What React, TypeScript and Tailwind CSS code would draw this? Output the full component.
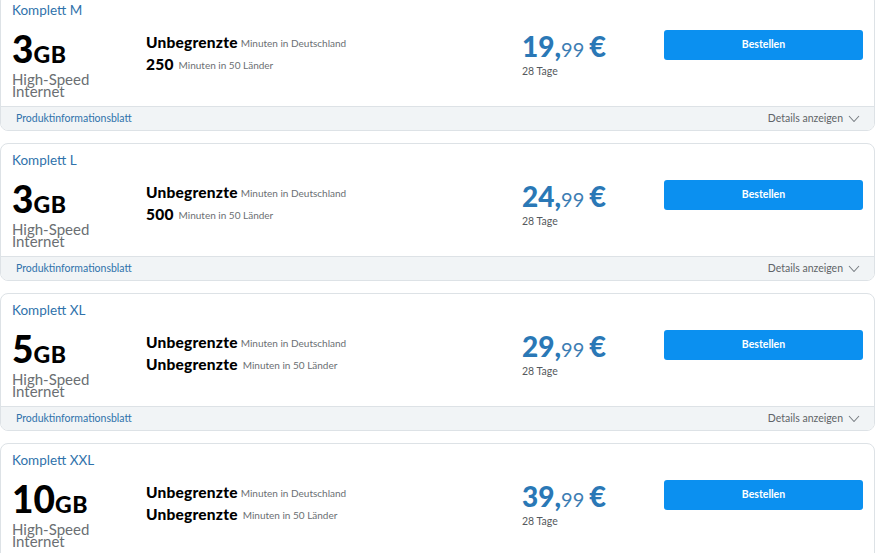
import React from "react";

type Plan = { name: string; gb: string; row2Bold: string; price: string };

const plans: Plan[] = [
  { name: "Komplett M", gb: "3", row2Bold: "250", price: "19" },
  { name: "Komplett L", gb: "3", row2Bold: "500", price: "24" },
  { name: "Komplett XL", gb: "5", row2Bold: "Unbegrenzte", price: "29" },
  { name: "Komplett XXL", gb: "10", row2Bold: "Unbegrenzte", price: "39" },
];

function Chevron() {
  return (
    <svg width="12" height="8" viewBox="0 0 12 8" className="ml-[5px]">
      <polyline points="1,1 6,6.5 11,1" fill="none" stroke="#7a7f84" strokeWidth="1.1" />
    </svg>
  );
}

function PlanCard({ plan }: { plan: Plan }) {
  return (
    <div className="w-[875px] h-[138px] shrink-0 flex flex-col rounded-lg border border-[#dde2e6] bg-white overflow-hidden">
      {/* header */}
      <div className="h-[36px] pl-[11px] pt-[8px] text-[13.5px] leading-4 text-[#2f72ab]">{plan.name}</div>

      {/* body */}
      <div className="h-[76px] flex items-start pl-[11px]">
        <div className="w-[134px] pt-[3px]">
          <div className="flex items-baseline leading-8 text-black font-black">
            <span className="text-[37px]">{plan.gb}</span>
            <span className="text-[23px] tracking-[0.7px]">GB</span>
          </div>
          <div className="mt-[4px] text-[15px] leading-[11.5px] text-[#6b6f73]">
            High-Speed
            <br />
            Internet
          </div>
        </div>

        <div className="flex-1 flex flex-col pt-[2px]">
          <div className="h-[22px] flex items-center">
            <span className="text-[15.5px] font-black tracking-[0.2px] text-black">Unbegrenzte</span>
            <span className="ml-[3px] text-[10px] text-[#6b6f73]">Minuten in Deutschland</span>
          </div>
          <div className="h-[22px] flex items-center">
            <span className="text-[15.5px] font-black tracking-[0.2px] text-black">{plan.row2Bold}</span>
            <span className="ml-[5px] text-[10px] text-[#6b6f73]">Minuten in 50 Länder</span>
          </div>
        </div>

        <div className="w-[142px] pt-[1px]">
          <div className="flex items-baseline leading-[30px] text-[#2a78b6]">
            <span className="text-[28px] font-black">{plan.price},</span>
            <span className="text-[20px] text-[#3d7db3]">99</span>
            <span className="ml-[5px] text-[29px] font-black">€</span>
          </div>
          <div className="mt-[1px] text-[10.5px] leading-3 text-[#55595d]">28 Tage</div>
        </div>

        <div className="w-[199px] h-[30px] mr-[11px] flex items-center justify-center rounded-[3px] bg-[#0b90f0] text-[10.5px] font-bold text-white">
          Bestellen
        </div>
      </div>

      {/* footer */}
      <div className="flex-1 flex items-center justify-between border-t border-[#dde2e6] bg-[#f1f4f6] pl-[15px] pr-[14px] text-[10.5px]">
        <span className="text-[#2f72ab]">Produktinformationsblatt</span>
        <span className="flex items-center text-[#5f6468]">
          Details anzeigen
          <Chevron />
        </span>
      </div>
    </div>
  );
}

export default function App() {
  return (
    <div className="w-[877px] h-[553px] overflow-hidden bg-white" style={{ fontFamily: "Lato, 'Open Sans', sans-serif" }}>
      <div className="-mt-[7px] flex flex-col gap-3">
        {plans.map((p) => (
          <PlanCard key={p.name} plan={p} />
        ))}
      </div>
    </div>
  );
}
